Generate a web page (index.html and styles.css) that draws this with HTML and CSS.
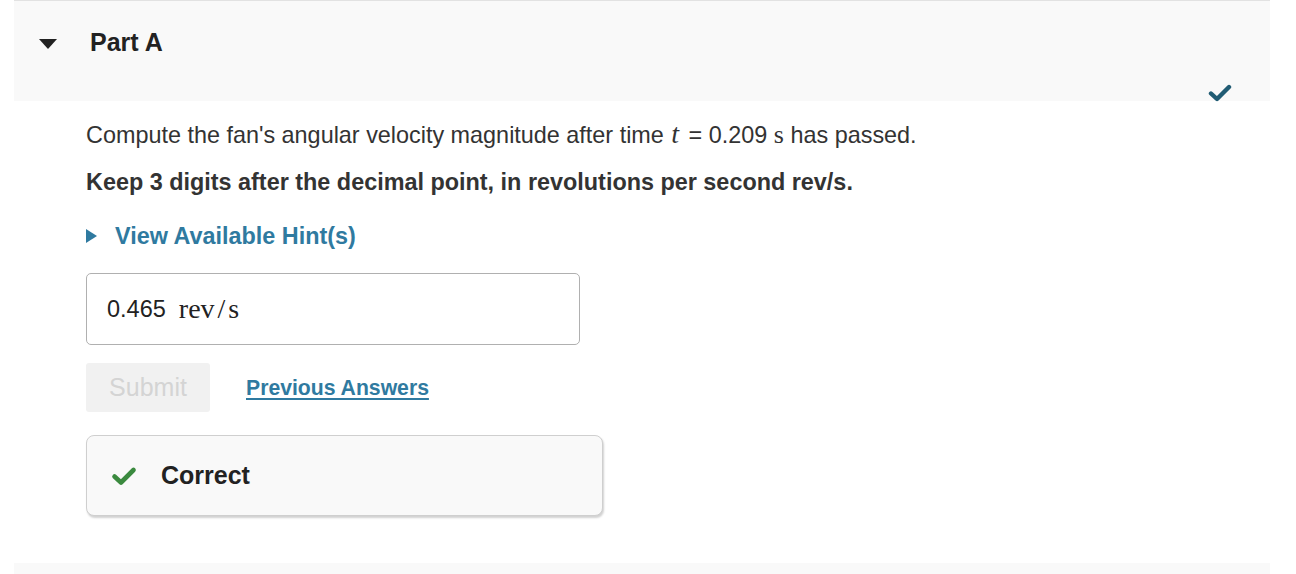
FILE: index.html
```html
<!DOCTYPE html>
<html>
<head>
<meta charset="utf-8">
<link rel="stylesheet" href="styles.css">
</head>
<body>
<div class="panel">
  <div class="header">
    <span class="caret"></span>
    <h2 class="title">Part A</h2>
    <svg class="done" width="24" height="18" viewBox="0 0 24 18"><path d="M3 9.5 L9 15 L21 3" fill="none" stroke="#215c74" stroke-width="4.4" stroke-linecap="round" stroke-linejoin="round"/></svg>
  </div>
  <div class="body">
    <p class="q">Compute the fan's angular velocity magnitude after time <span class="mi">t</span> = 0.209 <span class="mu">s</span> has passed.</p>
    <p class="q bold">Keep 3 digits after the decimal point, in revolutions per second rev/s.</p>
    <div class="hint"><span class="hcaret"></span><span class="hlink">View Available Hint(s)</span></div>
    <div class="answer">0.465 <span class="unit">rev<span class="sl">/</span>s</span></div>
    <div class="actions">
      <div class="submit">Submit</div>
      <a class="prev">Previous Answers</a>
    </div>
    <div class="correct">
      <svg class="gcheck" width="26" height="20" viewBox="0 0 26 20"><path d="M3.5 10.5 L10 16.5 L22.5 4" fill="none" stroke="#3b8a3f" stroke-width="4.6" stroke-linecap="round" stroke-linejoin="round"/></svg>
      <span class="ctext">Correct</span>
    </div>
  </div>
  <div class="next"></div>
</div>
</body>
</html>
```
FILE: styles.css
```css
html, body { margin: 0; padding: 0; background: #fff; }
body { font-family: "Liberation Sans", Arial, sans-serif; color: #333; }
.panel { margin-left: 14px; width: 1256px; }
.header {
  position: relative;
  height: 101px;
  border-top: 1px solid #e2e2e2;
  background: #f9f9f9;
  display: flex;
  align-items: flex-start;
  padding-top: 26px;
  box-sizing: border-box;
}
.caret {
  margin-left: 25px;
  margin-top: 12px;
  width: 0; height: 0;
  border-left: 9px solid transparent;
  border-right: 9px solid transparent;
  border-top: 10px solid #222;
}
.title {
  margin: 0 0 0 33px;
  font-size: 25px;
  line-height: 30px;
  font-weight: bold;
  color: #222;
}
.done { position: absolute; right: 38px; bottom: -1px; }
.body { padding-left: 72px; }
.q { margin: 0; font-size: 23.4px; line-height: 26px; height: 26px; color: #333; white-space: nowrap; }
.q:first-child { margin-top: 19px; }
.q.bold { font-weight: bold; margin-top: 23px; }
.mi { font-family: "Liberation Serif", "Times New Roman", serif; font-style: italic; font-size: 28px; line-height: 1; margin: 0 3px 0 1px; }
.mu { font-family: "Liberation Serif", "Times New Roman", serif; font-size: 26px; line-height: 1; }
.hint { display: flex; align-items: center; margin-top: 28px; height: 26px; }
.hcaret {
  width: 0; height: 0;
  border-top: 7px solid transparent;
  border-bottom: 7px solid transparent;
  border-left: 11px solid #2f7aa0;
}
.hlink { margin-left: 18px; font-size: 23.4px; font-weight: bold; color: #2f7aa0; }
.answer {
  margin-top: 24px;
  width: 494px; height: 72px;
  box-sizing: border-box;
  border: 1px solid #b0b0b0;
  border-radius: 5px;
  padding-left: 20px;
  display: flex; align-items: center;
  font-size: 23.5px; color: #222;
}
.unit { font-family: "Liberation Serif", "Times New Roman", serif; font-size: 28px; margin-left: 13px; }
.sl { margin: 0 3px; }
.actions { display: flex; align-items: center; margin-top: 18px; }
.submit {
  width: 124px; height: 49px;
  background: #f1f1f1; border-radius: 3px;
  color: #d4d4d4; font-size: 25px;
  display: flex; align-items: center; justify-content: center;
}
.prev {
  margin-left: 36px; font-size: 21.2px; font-weight: bold; color: #2f7aa0;
  text-decoration: underline; text-underline-offset: 3px; text-decoration-thickness: 2px;
}
.correct {
  margin-top: 23px;
  width: 517px; height: 81px;
  box-sizing: border-box;
  background: #f9f9f9;
  border: 1px solid #cfcfcf;
  border-radius: 8px;
  box-shadow: 1px 2px 2px rgba(0,0,0,0.18);
  display: flex; align-items: center;
  padding-left: 24px;
}
.ctext { margin-left: 24px; font-size: 25px; font-weight: bold; color: #222; }
.next { margin-top: 47px; height: 12px; background: #f9f9f9; }
```
